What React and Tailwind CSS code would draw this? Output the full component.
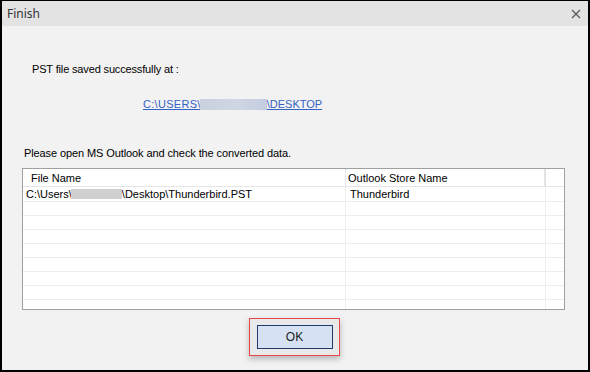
import React from "react";

const rows = [
  { file: true, store: "Thunderbird" },
  {}, {}, {}, {}, {}, {}, {},
];

function CloseIcon() {
  return (
    <svg width="10" height="10" viewBox="0 0 10 10" className="block">
      <path d="M1 1 L9 9 M9 1 L1 9" stroke="#5a5a5a" strokeWidth="1.3" />
    </svg>
  );
}

export default function App() {
  const font = { fontFamily: '"Liberation Sans", Arial, sans-serif' };
  return (
    <div className="w-[590px] h-[372px] bg-[#f2f2f2] flex flex-col border-black border-t border-x-2 border-b-2 text-black" style={font}>
      <div className="h-[25px] shrink-0 bg-[#e3e3e3] flex items-center justify-between pl-[5px] pr-[7px]">
        <span className="text-[12px] text-[#333]" style={{ fontFamily: '"Noto Sans", "Liberation Sans", sans-serif' }}>Finish</span>
        <CloseIcon />
      </div>

      <div className="flex flex-col text-[11px] leading-[14px]">
        <p className="mt-[36px] pl-[30px] tracking-[-0.15px]">PST file saved successfully at :</p>

        <div className="mt-[21px] pl-[141px] flex items-center text-[#3461c4]">
          <span className="underline underline-offset-[1px] tracking-[0.3px]">C:\USERS\</span>
          <span className="w-[67px] h-[11px] bg-gradient-to-r from-[#c9d1df] via-[#cfd6e3] to-[#c4cde0] -ml-[1px]" />
          <span className="underline underline-offset-[1px]">\DESKTOP</span>
        </div>

        <p className="mt-[35px] pl-[22px] tracking-[-0.1px]">Please open MS Outlook and check the converted data.</p>

        <div className="mt-[8px] ml-[20px] w-[543px] h-[142px] border border-[#a0a0a0] bg-white flex flex-col overflow-hidden">
          <div className="h-[18px] shrink-0 flex border-b border-[#e5e5e5]">
            <div className="w-[323px] pl-[8px] flex items-center border-r border-[#e5e5e5]">File Name</div>
            <div className="w-[200px] pl-[2px] flex items-center border-r-2 border-[#e3e3e3]">Outlook Store Name</div>
            <div className="flex-1" />
          </div>
          {rows.map((r, i) => (
            <div key={i} className={`${i === 0 ? "h-[15px]" : "h-[14px]"} shrink-0 flex border-b border-[#ededed]`}>
              <div className="w-[323px] pl-[3px] flex items-center border-r border-[#efefef]">
                {r.file && (
                  <>
                    <span>C:\Users\</span>
                    <span className="w-[51px] h-[10px] bg-[#d0d0d0] -ml-[1px]" />
                    <span>\Desktop\Thunderbird.PST</span>
                  </>
                )}
              </div>
              <div className="w-[200px] pl-[4px] flex items-center border-r border-[#efefef]">{r.store}</div>
              <div className="flex-1" />
            </div>
          ))}
          <div className="flex-1 flex">
            <div className="w-[323px] border-r border-[#efefef]" />
            <div className="w-[200px] border-r border-[#efefef]" />
          </div>
        </div>

        <div className="mt-[8px] ml-[247px] w-[91px] h-[38px] border-[1.5px] border-[#e8474a] bg-[#e9e9e9] shadow-[0_3px_6px_rgba(0,0,0,0.25)] flex items-center justify-center">
          <button className="w-[76px] h-[24px] bg-[#d6e2f3] border border-[#1f3a6d] text-[12px] text-[#1a1a1a] flex items-center justify-center">
            OK
          </button>
        </div>
      </div>
    </div>
  );
}
